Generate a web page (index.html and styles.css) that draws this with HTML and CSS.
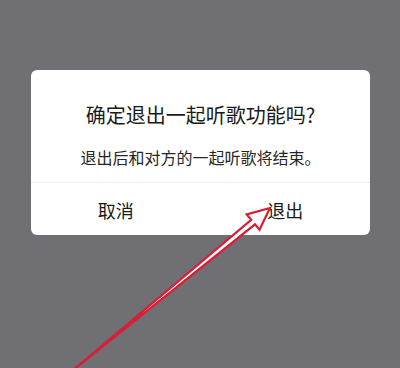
FILE: index.html
```html
<!DOCTYPE html>
<html lang="zh-CN">
<head>
<meta charset="utf-8">
<link rel="stylesheet" href="styles.css">
</head>
<body>
<div class="screen">
  <div class="dialog">
    <div class="body">
      <div class="title">确定退出一起听歌功能吗?</div>
      <div class="msg">退出后和对方的一起听歌将结束。</div>
    </div>
    <div class="actions">
      <div class="btn">取消</div>
      <div class="btn">退出</div>
    </div>
  </div>
  <svg class="arrow" width="400" height="368" viewBox="0 0 400 368">
    <polygon points="270,208 246.7,214.4 251.2,219.8 72,371 255,224.4 259.5,229.8" fill="#fff" stroke="#d81e34" stroke-width="2.2" stroke-linejoin="miter"/>
  </svg>
</div>
</body>
</html>
```
FILE: styles.css
```css
html, body {
  margin: 0;
  padding: 0;
  background: #707074;
}
.screen {
  position: relative;
  width: 400px;
  height: 368px;
  overflow: hidden;
  padding-top: 70px;
  box-sizing: border-box;
  font-family: "Noto Sans CJK SC", "Noto Sans", sans-serif;
}
.dialog {
  width: 339px;
  margin-left: 31px;
  background: #fff;
  border-radius: 6px;
  overflow: hidden;
}
.body {
  padding: 31px 0 14px;
  display: flex;
  flex-direction: column;
  align-items: center;
  gap: 17px;
  border-bottom: 1px solid #eeeeee;
}
.title {
  font-size: 20px;
  line-height: 28px;
  color: #1a1a1a;
}
.msg {
  font-size: 16px;
  line-height: 22px;
  color: #262626;
}
.actions {
  display: flex;
  height: 52px;
}
.btn {
  flex: 1;
  display: flex;
  align-items: center;
  justify-content: center;
  font-size: 18px;
  color: #1a1a1a;
  padding-top: 2px;
}
.arrow {
  position: absolute;
  left: 0;
  top: 0;
}
```
